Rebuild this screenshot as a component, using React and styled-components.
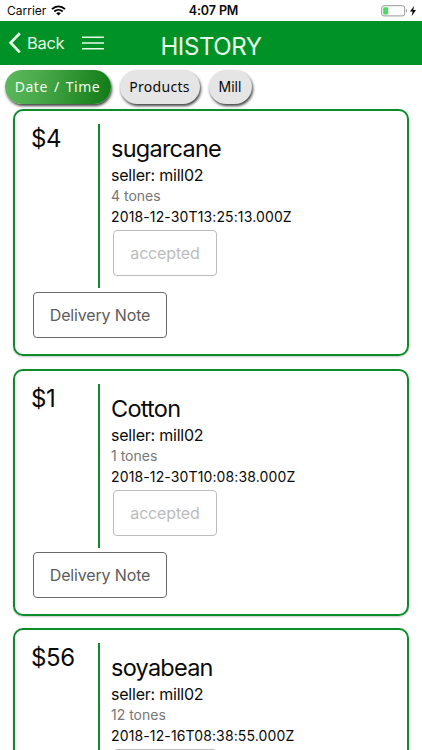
import React, { useState } from 'react';
import styled, { createGlobalStyle } from 'styled-components';

const GlobalStyle = createGlobalStyle`
  * {
    box-sizing: border-box;
  }

  body {
    margin: 0;
    height: 750px;
    overflow: hidden;
    background: #fff;
    font-family: Inter, 'Liberation Sans', sans-serif;
    color: #0a0a0a;
  }
`;

const Screen = styled.div`
  display: flex;
  flex-direction: column;
  height: 750px;
  overflow: hidden;
`;

const StatusBar = styled.div`
  flex: none;
  height: 21px;
  padding: 0 5px 0 7px;
  display: grid;
  grid-template-columns: 1fr auto 1fr;
  align-items: center;
  line-height: 21px;
`;

const Carrier = styled.div`
  display: flex;
  align-items: center;
  gap: 5px;
  font-size: 12px;
  letter-spacing: 0;
`;

const Clock = styled.div`
  font-size: 12.5px;
  font-weight: 600;
  letter-spacing: -0.1px;
  padding-left: 3px;
`;

const Battery = styled.div`
  display: flex;
  justify-content: flex-end;
`;

const Header = styled.header`
  flex: none;
  height: 44px;
  background: #009127;
  color: #e8fbe9;
  display: grid;
  grid-template-columns: 1fr auto 1fr;
  align-items: center;
  padding: 0 8px;
`;

const HeaderLeft = styled.div`
  display: flex;
  align-items: center;
`;

const BackButton = styled.button`
  display: flex;
  align-items: center;
  gap: 6px;
  padding: 0;
  border: 0;
  background: none;
  color: inherit;
  font-family: inherit;
  font-size: 16.5px;
  line-height: 22px;
  letter-spacing: -0.3px;
`;

const MenuButton = styled.button`
  display: flex;
  margin-left: 18px;
  padding: 0;
  border: 0;
  background: none;
  color: inherit;
`;

const Title = styled.h1`
  margin: 0;
  padding-top: 7px;
  font-size: 24px;
  font-weight: 400;
  line-height: 30px;
  letter-spacing: -0.4px;
`;

const Filters = styled.div`
  flex: none;
  display: flex;
  gap: 9px;
  padding: 5px 5px 0;
  height: 44px;
`;

const Chip = styled.button`
  width: ${(props) => props.$width}px;
  height: 34px;
  padding: 0 1px 1px 0;
  border: 0;
  border-radius: 17px;
  font-family: ${(props) => (props.$plain ? 'Inter' : "'Noto Sans'")}, sans-serif;
  font-size: 14px;
  line-height: 20px;
  letter-spacing: ${(props) => props.$spacing}px;
  word-spacing: ${(props) => (props.$active ? 2 : 0)}px;
  color: ${(props) => (props.$active ? '#effbef' : '#0a0a0a')};
  background: ${(props) =>
    props.$active ? 'linear-gradient(100deg, #5cb85c 0%, #4cab4c 30%, #107a16 100%)' : '#e5e5e5'};
  box-shadow: 1px 2px 3px rgba(0, 0, 0, 0.75);
`;

const List = styled.main`
  display: flex;
  flex-direction: column;
  gap: 12.5px;
  padding: 0 13px;
`;

const Card = styled.article`
  flex: none;
  height: 247px;
  border: 2px solid #0c8c2a;
  border-radius: 10px;
  padding: 13px 18px 0;
  box-shadow: 0 1px 2px rgba(0, 0, 0, 0.22);
`;

const CardTop = styled.div`
  display: flex;
  height: 164px;
`;

const Price = styled.div`
  width: 67px;
  margin-left: -2px;
  font-size: 24px;
  line-height: 30px;
  letter-spacing: -0.4px;
`;

const Details = styled.div`
  flex: 1;
  border-left: 2px solid #0c8c2a;
  padding: 10px 0 0 11px;
`;

const Product = styled.h2`
  margin: 0;
  font-size: 23.5px;
  font-weight: 400;
  line-height: 30px;
  letter-spacing: -0.75px;
`;

const Seller = styled.div`
  font-size: 16px;
  line-height: 22px;
  letter-spacing: -0.22px;
`;

const Amount = styled.div`
  font-size: 14px;
  line-height: 20px;
  color: #777;
`;

const Timestamp = styled.div`
  font-size: 14px;
  line-height: 21px;
  letter-spacing: 0.13px;
`;

const OutlineButton = styled.button`
  display: block;
  width: ${(props) => props.$width}px;
  height: 46px;
  padding: 0;
  margin: ${(props) => props.$margin};
  border: 1px solid ${(props) => (props.disabled ? '#bcbcbc' : '#6a6a6a')};
  border-radius: 4px;
  background: #fff;
  color: ${(props) => (props.disabled ? '#bcbcbc' : '#5c5c5c')};
  font-family: inherit;
  font-size: 16px;
  letter-spacing: -0.15px;
`;

const filters = [
  { name: 'Date / Time', width: 106, spacing: 0.5 },
  { name: 'Products', width: 80, spacing: 0.3 },
  { name: 'Mill', width: 43, spacing: 0, plain: true },
];

const orders = [
  { price: '$4', product: 'sugarcane', seller: 'mill02', amount: 4, date: '2018-12-30T13:25:13.000Z' },
  { price: '$1', product: 'Cotton', seller: 'mill02', amount: 1, date: '2018-12-30T10:08:38.000Z' },
  { price: '$56', product: 'soyabean', seller: 'mill02', amount: 12, date: '2018-12-16T08:38:55.000Z' },
];

function WifiIcon() {
  return (
    <svg width="15" height="11" viewBox="0 0 15 11">
      <path d="M1 4.2C4.7.4 10.3.4 14 4.2" fill="none" stroke="#000" strokeWidth="1.9" />
      <path d="M3.3 6.5c2.4-2.3 6-2.3 8.4 0" fill="none" stroke="#000" strokeWidth="1.8" />
      <path d="M5.2 8.2c1.3-1.2 3.3-1.2 4.6 0L7.5 10.6z" fill="#000" />
    </svg>
  );
}

function BatteryIcon() {
  return (
    <svg width="36" height="12" viewBox="0 0 36 12">
      <rect x="0.7" y="0.7" width="23" height="10.2" rx="2.2" fill="#fff" stroke="#999" />
      <rect x="2.2" y="2.2" width="5" height="7.2" rx="0.7" fill="#4cd964" />
      <path d="M25 4c1.5.6 1.5 3 0 3.6z" fill="#999" />
      <path d="M33.2 0.8 29 6.6h2.7l-1.1 4.6 4.4-6.1h-2.8z" fill="#000" />
    </svg>
  );
}

function OrderCard({ order }) {
  return (
    <Card>
      <CardTop>
        <Price>{order.price}</Price>
        <Details>
          <Product>{order.product}</Product>
          <Seller>seller: {order.seller}</Seller>
          <Amount>{order.amount} tones</Amount>
          <Timestamp>{order.date}</Timestamp>
          <OutlineButton disabled $width={104} $margin="3px 0 0 2px">
            accepted
          </OutlineButton>
        </Details>
      </CardTop>
      <OutlineButton $width={134} $margin="4px 0 0">
        Delivery Note
      </OutlineButton>
    </Card>
  );
}

function App() {
  const [selected, setSelected] = useState('Date / Time');

  return (
    <Screen>
      <GlobalStyle />
      <StatusBar>
        <Carrier>
          Carrier
          <WifiIcon />
        </Carrier>
        <Clock>4:07 PM</Clock>
        <Battery>
          <BatteryIcon />
        </Battery>
      </StatusBar>

      <Header>
        <HeaderLeft>
          <BackButton>
            <svg width="13" height="22" viewBox="0 0 13 22">
              <path d="M11.8 1.2 2.6 10.8l9.2 9.6" fill="none" stroke="currentColor" strokeWidth="2.7" />
            </svg>
            Back
          </BackButton>
          <MenuButton>
            <svg width="22" height="14" viewBox="0 0 22 14">
              <path d="M0 1.3h22M0 7h22M0 12.7h22" fill="none" stroke="currentColor" strokeWidth="1.5" />
            </svg>
          </MenuButton>
        </HeaderLeft>
        <Title>HISTORY</Title>
      </Header>

      <Filters>
        {filters.map((filter) => (
          <Chip
            key={filter.name}
            $width={filter.width}
            $spacing={filter.spacing}
            $plain={filter.plain}
            $active={selected === filter.name}
            onClick={() => setSelected(filter.name)}
          >
            {filter.name}
          </Chip>
        ))}
      </Filters>

      <List>
        {orders.map((order) => (
          <OrderCard key={order.date} order={order} />
        ))}
      </List>
    </Screen>
  );
}

export default App;
